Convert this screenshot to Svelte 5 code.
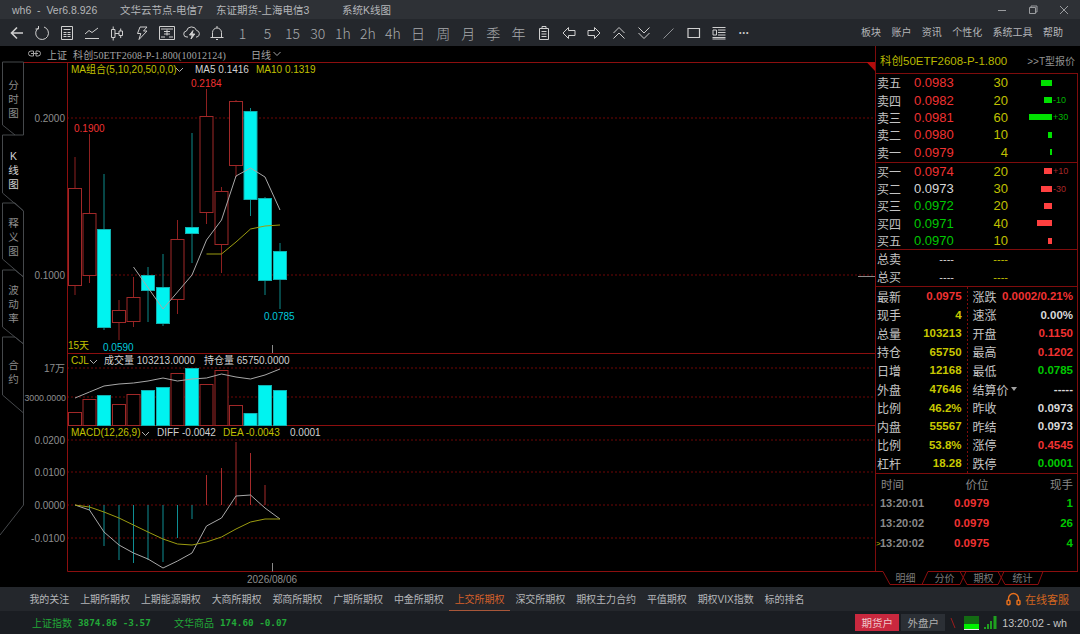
<script>
 const periods = ['1', '5', '15', '30', '1h', '2h', '4h', '日', '周', '月', '季', '年'];
 const menus = ['板块', '账户', '资讯', '个性化', '系统工具', '帮助'];

 // x, open/close box top and bottom, high, low, rising
 const candles = [
     { x: 75, top: 188, bottom: 285, hi: 157, lo: 295, up: true },
     { x: 89.5, top: 213, bottom: 275, hi: 134, lo: 283, up: true },
     { x: 104, top: 229, bottom: 327, hi: 174, lo: 330, up: false },
     { x: 119, top: 310, bottom: 322, hi: 300, lo: 340, up: true },
     { x: 133.5, top: 297, bottom: 321, hi: 277, lo: 327, up: true },
     { x: 148, top: 275, bottom: 290, hi: 267, lo: 322, up: false },
     { x: 163, top: 287, bottom: 323, hi: 254, lo: 326, up: false },
     { x: 177.5, top: 239, bottom: 299, hi: 220, lo: 314, up: true },
     { x: 192, top: 227, bottom: 233, hi: 133, lo: 263, up: false },
     { x: 206.5, top: 116, bottom: 212, hi: 89, lo: 224, up: true },
     { x: 221.5, top: 191, bottom: 244, hi: 187, lo: 273, up: true },
     { x: 236, top: 101, bottom: 165, hi: 100, lo: 177, up: true },
     { x: 250.5, top: 111, bottom: 199, hi: 108, lo: 216, up: false },
     { x: 265, top: 198, bottom: 280, hi: 197, lo: 295, up: false },
     { x: 280, top: 251, bottom: 279, hi: 243, lo: 309, up: false }
 ];
 const volumes = [412, 399, 395, 404, 394, 390, 387, 373, 368, 384, 370, 405, 413, 385, 390];
 const xs = candles.map((c) => c.x);
 const line = (ys, from = 0) => ys.map((y, i) => `${xs[i + from]},${y}`).join(' ');

 const ma5 = '133.5,267 163,309 192,275 206.5,240 221.5,220 236,176 250.5,168 265,177 280,210';
 const ma10 = line([254, 254, 242, 229, 226, 225], 9);
 const cjl = line([398, 392, 386, 384, 383, 381, 378, 381, 379, 378, 374, 377, 379, 375, 369]);
 const diff = line([505, 510, 532, 545, 553, 559, 568, 561, 553, 526, 518, 496, 495, 508, 519]);
 const dea = line([505, 507, 512, 518, 525, 532, 539, 544, 545, 542, 537, 529, 522, 519, 519]);
 const macd = [510, 546, 560, 563, 560, 562, 538, 519, 475, 468, 442, 453, 485];

 const asks = [
     { name: '卖五', price: '0.0983', vol: 30 },
     { name: '卖四', price: '0.0982', vol: 20, delta: '-10' },
     { name: '卖三', price: '0.0981', vol: 60, delta: '+30' },
     { name: '卖二', price: '0.0980', vol: 10 },
     { name: '卖一', price: '0.0979', vol: 4 }
 ];
 const bids = [
     { name: '买一', price: '0.0974', vol: 20, delta: '+10', cls: 'red' },
     { name: '买二', price: '0.0973', vol: 30, delta: '-30', cls: 'white' },
     { name: '买三', price: '0.0972', vol: 20, cls: 'green' },
     { name: '买四', price: '0.0971', vol: 40, cls: 'green' },
     { name: '买五', price: '0.0970', vol: 10, cls: 'green' }
 ];
 const stats = [
     ['最新', '0.0975', 'red', '涨跌', '0.0002/0.21%', 'red'],
     ['现手', '4', 'yellow', '速涨', '0.00%', 'white'],
     ['总量', '103213', 'yellow', '开盘', '0.1150', 'red'],
     ['持仓', '65750', 'yellow', '最高', '0.1202', 'red'],
     ['日增', '12168', 'yellow', '最低', '0.0785', 'green'],
     ['外盘', '47646', 'yellow', '结算价', '-----', 'white'],
     ['比例', '46.2%', 'yellow', '昨收', '0.0973', 'white'],
     ['内盘', '55567', 'yellow', '昨结', '0.0973', 'white'],
     ['比例', '53.8%', 'yellow', '涨停', '0.4545', 'red'],
     ['杠杆', '18.28', 'yellow', '跌停', '0.0001', 'green']
 ];
 const trades = [
     { time: '13:20:01', price: '0.0979', vol: 1 },
     { time: '13:20:02', price: '0.0979', vol: 26 },
     { time: '13:20:02', price: '0.0975', vol: 4, mark: true }
 ];
 const tabs = ['我的关注', '上期所期权', '上期能源期权', '大商所期权', '郑商所期权', '广期所期权', '中金所期权', '上交所期权', '深交所期权', '期权主力合约', '平值期权', '期权VIX指数', '标的排名'];
</script>

<div class="app">
    <header class="titlebar">
        <span class="ver">wh6 &nbsp;-&nbsp; Ver6.8.926</span>
        <span class="node1">文华云节点-电信7</span>
        <span class="node2">东证期货-上海电信3</span>
        <span class="node3">系统K线图</span>
        <div class="winbtns">
            <svg width="12" height="12" viewBox="0 0 12 12"><path d="M2 6.500h8" /></svg>
            <svg width="12" height="12" viewBox="0 0 12 12"><path d="M2.500 3.500h6v6h-6zM4 3.500V2h6v6H8.500" /></svg>
            <svg width="12" height="12" viewBox="0 0 12 12"><path d="M2 2l8 8M10 2l-8 8" /></svg>
        </div>
    </header>

    <nav class="toolbar">
        <span class="tool"><svg width="16" height="16" viewBox="0 0 16 16"><path d="M14 8H3M8 2.500L2.500 8 8 13.500" stroke-width="1.600" /></svg></span>
        <span class="tool"><svg width="16" height="16" viewBox="0 0 16 16"><path d="M5 2.500A6.400 6.400 0 1 0 10 2M4.500 1v3h-3" /></svg></span>
        <span class="tool"><svg width="16" height="16" viewBox="0 0 16 16"><path d="M2.500 1.500h11v13h-11zM4.500 4.500h7M4.500 7.500h3M8.500 7.500h3M4.500 9.500h3M8.500 9.500h3M4.500 11.500h3M8.500 11.500h3" /></svg></span>
        <span class="tool"><svg width="16" height="16" viewBox="0 0 16 16"><path d="M1 9l4-3.500 3 2L14 3M1 13.500h14" /></svg></span>
        <span class="tool"><svg width="16" height="16" viewBox="0 0 16 16"><path d="M2.500 4.500h3.500v8h-3.500zM4.200 1.500v3M4.200 12.500v3M10 6h3.500v4.500H10zM11.700 3.500V6M11.700 10.500v2.500M6 8.500h4" /></svg></span>
        <span class="tool"><svg width="16" height="16" viewBox="0 0 16 16"><path d="M6 2h7l-3.500 4H13L5 14.500l1.800-6H3.500z" /></svg></span>
        <span class="tool"><svg width="18" height="16" viewBox="0 0 18 16"><path d="M1.500 1.500h15v13h-15zM3 4h12M6 6.500h6M6 9h6M9 4.500v6M3 12h4M11 12h4" /></svg></span>
        <span class="tool"><svg width="18" height="16" viewBox="0 0 18 16"><path d="M5 12H4a3 3 0 0 1-.5-6 5.200 5.200 0 0 1 10-.6A3.400 3.400 0 0 1 14 12h-1" /><path d="M10 5.500L6.500 10h2.800L8 14l3.800-5H9z" fill="#cfcfcf" /></svg></span>
        <span class="tool"><svg width="16" height="16" viewBox="0 0 16 16"><path d="M3.500 12.500v-5a4.500 4.500 0 0 1 9 0v5M1.500 12.500h13M7 14.500h2M8 1v2" /></svg></span>

        {#each periods as period}
            <span class="tool period">{period}</span>
        {/each}

        <span class="tool"><svg width="14" height="16" viewBox="0 0 14 16"><path d="M2.500 3.500h9v11h-9zM5 1.500h4v2H5zM4.500 6.500h5M4.500 9h5M4.500 11.500h5" /></svg></span>
        <span class="tool"><svg width="16" height="16" viewBox="0 0 16 16"><path d="M7.500 2.500L2 8l5.500 5.500V10.500H14v-5H7.500z" /></svg></span>
        <span class="tool"><svg width="16" height="16" viewBox="0 0 16 16"><path d="M8.500 2.500L14 8l-5.500 5.500V10.500H2v-5h6.500z" /></svg></span>
        <span class="tool"><svg width="16" height="16" viewBox="0 0 16 16"><path d="M2.500 8L8 2.500 13.500 8M2.500 13.500L8 8l5.500 5.500" /></svg></span>
        <span class="tool"><svg width="16" height="16" viewBox="0 0 16 16"><path d="M2.500 2.500L8 8l5.500-5.500M2.500 8L8 13.500 13.500 8" /></svg></span>
        <span class="tool"><svg width="16" height="16" viewBox="0 0 16 16"><path d="M2.500 13.500l10-10" stroke="#8d9094" /></svg></span>
        <span class="tool"><svg width="16" height="16" viewBox="0 0 16 16"><path d="M2 3.500h11.500v9H2z" stroke-width="1.200" /></svg></span>
        <span class="tool"><svg width="16" height="16" viewBox="0 0 16 16"><path d="M1.500 2.500h13M7 5h7.500M7 7.500h7.500M7 10h7.500M1.500 12.500h13M1.500 14h13M2 5h3.500v5H2z" /></svg></span>
        <span class="tool dots">•••</span>

        <div class="menus">
            {#each menus as menu}
                <span>{menu}</span>
            {/each}
        </div>
    </nav>

    <main class="main">
        <aside class="sidetabs">
            <svg class="sideline" width="24" height="541" viewBox="0 46 24 541">
                <path d="M23.500 62H2.500V125L15 135H23.500V62" />
                <path d="M15 135H2.500V193L23.500 211" />
                <path d="M2.500 203H15L23.500 211M2.500 203V259L23.500 277" />
                <path d="M2.500 270H15L23.500 277M2.500 270V327L23.500 344" />
                <path d="M2.500 337H15L23.500 344M2.500 337V395L23.500 413" />
                <path d="M23.500 211V505L0 535" />
            </svg>
            <div class="vtab t1">分<br />时<br />图</div>
            <div class="vtab on">K<br />线<br />图</div>
            <div class="vtab">释<br />义<br />图</div>
            <div class="vtab t4">波<br />动<br />率</div>
            <div class="vtab">合<br />约</div>
        </aside>

        <section class="chart">
            <div class="subhead">
                <svg width="13" height="8" viewBox="0 0 13 8"><path d="M3 1h2.500v5H3a2.500 2.500 0 0 1 0-5zM8 1h2a2.500 2.500 0 0 1 0 5H8zM3 3.500h7" /></svg>
                <span class="market">上证</span>
                <span class="contract">科创50ETF2608-P-1.800(10012124)</span>
                <span class="period-sel">日线</span>
                <svg width="8" height="6" viewBox="0 0 8 6"><path d="M.5 1l3.500 3.500L7.500 1" /></svg>
            </div>

            <svg class="plot" width="851" height="525" viewBox="24 62 851 525">
                <!-- frame and grid -->
                <g class="grid">
                    <path d="M67 118H875M67 275H875M67 368H875M67 397H875M67 440H875M67 472H875M67 505H875M67 538H875" />
                </g>
                <g class="frame">
                    <path d="M24 62.500H875M67.500 62V571.500H875M67 353.500H875M67 425.500H875" />
                </g>
                <path class="corner" d="M866.500 62H875V71z" />

                <!-- candles -->
                {#each candles as c}
                    <g class={c.up ? 'up' : 'down'}>
                        <line x1={c.x} x2={c.x} y1={c.hi} y2={c.lo} />
                        <rect x={c.x - 6.500} y={c.top + .5} width="13" height={c.bottom - c.top} />
                    </g>
                {/each}
                <polyline class="white-line" points={ma5} />
                <polyline class="yellow-line" points={ma10} />

                <!-- volume -->
                {#each volumes as top, i}
                    <rect class={candles[i].up ? 'vol-up' : 'vol-down'} x={xs[i] - 6.500} y={top + .5} width="13" height={425 - top} />
                {/each}
                <polyline class="white-line" points={cjl} />

                <!-- macd -->
                {#each macd as y, i}
                    <line class={y < 505 ? 'bar-up' : 'bar-down'} x1={xs[i + 1]} x2={xs[i + 1]} y1="505" y2={y} />
                {/each}
                <polyline class="white-line" points={diff} />
                <polyline class="yellow-line" points={dea} />

                <!-- cursor -->
                <path class="cursor" d="M272.500 345V353M272.500 563V571.500M858 276.500H875" />

                <!-- axis labels -->
                <g class="axis">
                    <text x="65" y="122">0.2000</text>
                    <text x="65" y="279">0.1000</text>
                    <text x="65" y="372">17万</text>
                    <text x="66" y="401" class="tiny">3000.0000</text>
                    <text x="65" y="444">0.0200</text>
                    <text x="65" y="476">0.0100</text>
                    <text x="65" y="509">0.0000</text>
                    <text x="65" y="542">-0.0100</text>
                </g>
                <text class="date" x="272" y="583">2026/08/06</text>

                <!-- legends -->
                <g class="legend">
                    <text x="71" y="73" class="olive">MA组合(5,10,20,50,0,0)</text>
                    <path class="chev" d="M176 68l3.500 3.500L183 68" />
                    <text x="195" y="73" class="light">MA5 0.1416</text>
                    <text x="256" y="73" class="olive">MA10 0.1319</text>
                    <text x="71" y="364" class="olive">CJL</text>
                    <path class="chev" d="M90 360l3.500 3.500L97 360" />
                    <text x="104" y="364" class="light">成交量 103213.0000</text>
                    <text x="204" y="364" class="light">持仓量 65750.0000</text>
                    <text x="71" y="436" class="olive">MACD(12,26,9)</text>
                    <path class="chev" d="M142 432l3.500 3.500L149 432" />
                    <text x="157" y="436" class="light">DIFF -0.0042</text>
                    <text x="223" y="436" class="olive">DEA -0.0043</text>
                    <text x="290" y="436" class="light">0.0001</text>
                    <text x="68" y="349" class="olive">15天</text>
                    <text x="191" y="87" class="redtxt">0.2184</text>
                    <text x="74" y="132" class="redtxt">0.1900</text>
                    <text x="264" y="320" class="cyantxt">0.0785</text>
                    <text x="103" y="351" class="cyantxt">0.0590</text>
                </g>
            </svg>
        </section>

        <section class="quote">
            <div class="qtitle">
                <span class="qname">科创50ETF2608-P-1.800</span>
                <span class="qlink">&gt;&gt;T型报价</span>
            </div>

            <div class="qbox">
                <div class="book">
                    {#each asks as row}
                        <div class="brow">
                            <span class="bname">{row.name}</span>
                            <span class="bprice red">{row.price}</span>
                            <span class="bvol">{row.vol}</span>
                            <span class="bbar"><i class="gbar" style="width: {row.vol * 0.38}px;"></i></span>
                            <span class="bdelta green">{row.delta ?? ''}</span>
                        </div>
                    {/each}
                </div>
                <div class="book">
                    {#each bids as row}
                        <div class="brow">
                            <span class="bname">{row.name}</span>
                            <span class="bprice {row.cls}">{row.price}</span>
                            <span class="bvol">{row.vol}</span>
                            <span class="bbar"><i class="rbar" style="width: {row.vol * 0.38}px;"></i></span>
                            <span class="bdelta dimred">{row.delta ?? ''}</span>
                        </div>
                    {/each}
                </div>
                <div class="totals">
                    <div class="brow"><span class="bname">总卖</span><span class="bprice white dash">----</span><span class="bvol dash">----</span></div>
                    <div class="brow"><span class="bname">总买</span><span class="bprice white dash">----</span><span class="bvol dash">----</span></div>
                </div>
                <div class="stats">
                    {#each stats as s}
                        <div class="srow">
                            <div class="scell left">
                                <span class="slabel">{s[0]}</span><b class={s[2]}>{s[1]}</b>
                            </div>
                            <div class="scell right">
                                <span class="slabel">{s[3]}{#if s[3] === '结算价'}<i class="caret"></i>{/if}</span><b class={s[5]}>{s[4]}</b>
                            </div>
                        </div>
                    {/each}
                </div>
                <div class="trades">
                    <div class="thead"><span>时间</span><span>价位</span><span>现手</span></div>
                    {#each trades as t}
                        <div class="trow">
                            <span class="mark">{t.mark ? '>' : ''}</span>
                            <span class="ttime">{t.time}</span>
                            <span class="tprice">{t.price}</span>
                            <span class="tvol">{t.vol}</span>
                        </div>
                    {/each}
                </div>
            </div>

            <div class="qtabs">
                <svg width="205" height="16" viewBox="875 571 205 16">
                    <path d="M875 571.500H883L890 584.500H922L928 571.500H1078" />
                    <path d="M922 584.500H960L966 571.500M960 571.500L967 584.500H998L1004 571.500M998 571.500L1005 584.500H1038L1043 571.500" />
                </svg>
                <span>明细</span><span>分价</span><span>期权</span><span>统计</span>
            </div>
        </section>
    </main>

    <nav class="tabs">
        <div class="tablist">
            {#each tabs as tab}
                <span class:active={tab === '上交所期权'}>{tab}</span>
            {/each}
        </div>
        <div class="service">
            <svg width="15" height="15" viewBox="0 0 15 15"><path d="M2.500 9V6.500a5 5 0 0 1 10 0V9" /><path d="M1 9a1.800 1.800 0 0 1 3 0v3a1.800 1.800 0 0 1-3 0zM11 9a1.800 1.800 0 0 1 3 0v3a1.800 1.800 0 0 1-3 0z" /></svg>
            <span>在线客服</span>
        </div>
    </nav>

    <footer class="status">
        <span class="idx idx1">上证指数</span><span class="num">3874.86 -3.57</span>
        <span class="idx idx2">文华商品</span><span class="num">174.60 -0.07</span>
        <div class="right">
            <span class="acct acct-on">期货户</span>
            <span class="acct">外盘户</span>
            <svg width="6" height="12" viewBox="0 0 6 12" class="slash"><path d="M1 1l4 10" /></svg>
            <span class="meter"></span>
            <svg width="14" height="13" viewBox="0 0 14 13" class="signal"><path d="M1 11h2v2H1zM4 8h2v5H4zM7 5h2v8H7zM10.500 0h3v13h-3z" /></svg>
            <span class="clock">13:20:02 - wh</span>
        </div>
    </footer>
</div>

<style>
 :global(body) {
     margin: 0;
     background: #000;
 }

 .app {
     width: 1080px;
     height: 634px;
     display: flex;
     flex-direction: column;
     overflow: hidden;
     font-family: "Liberation Sans", "Noto Sans CJK SC", sans-serif;
     color: #c8c8c8;
     background: #000;
 }

 svg {
     fill: none;
     stroke: #cfcfcf;
     display: block;
 }

 /* title bar */
 .titlebar {
     height: 19px;
     flex: none;
     background: #2e3136;
     display: flex;
     align-items: center;
     font-size: 10.500px;
     color: #b4b6b9;
     padding-left: 12px;
     box-sizing: border-box;
 }

 .ver { width: 108px; white-space: nowrap; }
 .node1 { width: 96px; white-space: nowrap; }
 .node2 { width: 126px; white-space: nowrap; }
 .node3 { white-space: nowrap; }

 .winbtns {
     margin-left: auto;
     display: flex;
     gap: 19px;
     padding-right: 10px;
 }

 .winbtns svg { stroke: #9a9c9f; }

 /* toolbar */
 .toolbar {
     height: 27px;
     flex: none;
     background: #24272c;
     display: flex;
     align-items: center;
     padding-left: 4px;
 }

 .tool {
     width: 25.100px;
     height: 27px;
     flex: none;
     display: flex;
     align-items: center;
     justify-content: center;
 }

 .period {
     font-family: "Noto Sans CJK SC", sans-serif;
     font-weight: 300;
     font-size: 14px;
     color: #a8aaad;
 }

 .dots {
     font-size: 7px;
     letter-spacing: 1px;
     color: #d0d0d0;
 }

 .menus {
     margin-left: auto;
     display: flex;
     gap: 10.400px;
     font-size: 10px;
     color: #b4b6b9;
     padding-right: 17px;
     padding-bottom: 2px;
 }

 /* main */
 .main {
     flex: 1;
     display: flex;
     min-height: 0;
 }

 .sidetabs {
     width: 24px;
     flex: none;
     position: relative;
     padding-top: 32px;
     box-sizing: border-box;
 }

 .sideline {
     position: absolute;
     left: 0;
     top: 0;
     stroke: #45484b;
 }

 .vtab {
     position: relative;
     height: 67px;
     padding-left: 3px;
     box-sizing: border-box;
     text-align: center;
     font-size: 10.500px;
     line-height: 14px;
     color: #8c8c8c;
 }

 .vtab.t1 { height: 71px; }
 .vtab.t4 { height: 75px; }
 .vtab.on { color: #d2d2d2; }

 .chart {
     width: 851px;
     flex: none;
     display: flex;
     flex-direction: column;
 }

 .subhead {
     height: 16px;
     flex: none;
     display: flex;
     align-items: center;
     font-size: 10px;
     color: #a4a4a4;
     padding-left: 4px;
 }

 .subhead svg { stroke: #a4a4a4; }

 .market { margin-left: 6px; }

 .contract {
     margin-left: 6px;
     font-family: "Liberation Serif", "Noto Sans CJK SC", serif;
     letter-spacing: .13px;
     width: 178px;
     white-space: nowrap;
 }

 .period-sel { margin-right: 2px; }

 .plot text {
     font-size: 10px;
     stroke: none;
 }

 .corner {
     fill: #b40c0c;
     stroke: none;
 }

 .grid path {
     stroke: #6e0606;
     stroke-dasharray: 2 2;
 }

 .frame path { stroke: #8c0f0f; }

 .up line { stroke: #8e2020; }
 .up rect { fill: #000; stroke: #a02828; }
 .down line { stroke: #0d8b8b; }
 .down rect { fill: #00f3f0; stroke: #11b0b0; }

 .vol-up { fill: #000; stroke: #a02828; }
 .vol-down { fill: #00f3f0; stroke: #11b0b0; }

 .white-line { stroke: #a8a8a8; fill: none; }
 .yellow-line { stroke: #9c9c10; fill: none; }

 .bar-up { stroke: #a52a2a; }
 .bar-down { stroke: #0f8e94; }

 .cursor { stroke: #8a8a8a; }

 .axis text {
     fill: #8e8e8e;
     text-anchor: end;
 }

 .axis .tiny { font-size: 8.800px; }

 .date {
     fill: #8e8e8e;
     text-anchor: middle;
 }

 .chev { stroke: #b0b0b0; }

 .olive { fill: #c0c000; }
 .light { fill: #d0d0d0; }
 .redtxt { fill: #f03232; }
 .cyantxt { fill: #00c8dc; }

 /* right hand quote */
 .quote {
     width: 205px;
     flex: none;
     display: flex;
     flex-direction: column;
 }

 .qtitle {
     height: 27px;
     flex: none;
     display: flex;
     justify-content: space-between;
     align-items: center;
     padding: 1px 5px 0 4px;
     box-sizing: border-box;
     border-left: 1px solid #7e0c0c;
     font-size: 11.500px;
 }

 .qname { color: #b8b800; }
 .qlink { color: #909090; font-size: 10px; }

 .qbox {
     height: 498px;
     flex: none;
     border: 1px solid #7e0c0c;
     border-bottom: none;
     box-sizing: border-box;
     display: flex;
     flex-direction: column;
     margin-right: 2px;
 }

 .book {
     height: 88.500px;
     flex: none;
     border-bottom: 1px solid #7e0c0c;
     box-sizing: border-box;
 }

 .book + .book { height: 87px; }

 .brow {
     height: 17.400px;
     display: flex;
     align-items: center;
     font-size: 13px;
 }

 .bname {
     width: 38px;
     padding-left: 1px;
     box-sizing: border-box;
     font-size: 12px;
     color: #c4c4c4;
 }

 .bprice { width: 40px; }

 .bvol {
     width: 54px;
     text-align: right;
     color: #c0c000;
 }

 .bbar {
     width: 44px;
     height: 6px;
     display: flex;
     justify-content: flex-end;
 }

 .bbar i { display: block; height: 6px; }

 .gbar { background: #00e000; }
 .rbar { background: #ff4040; }

 .bdelta {
     font-size: 9px;
     padding-left: 1px;
 }

 .bdelta.green { color: #00b400; }
 .bdelta.dimred { color: #a82828; }

 .red { color: #f03232; }
 .green { color: #00c800; }
 .white { color: #d8d8d8; }
 .yellow { color: #c8c800; }

 .totals {
     height: 37.500px;
     flex: none;
     border-bottom: 1px solid #7e0c0c;
     box-sizing: border-box;
 }

 .totals .brow { height: 18px; }

 .dash { font-size: 11px; }
 .bprice.dash { text-align: right; }
 .bvol.dash { color: #c0c000; }

 .stats {
     height: 187px;
     flex: none;
     border-bottom: 1px solid #7e0c0c;
     box-sizing: border-box;
     display: flex;
     flex-direction: column;
     background: linear-gradient(#7e0c0c 50%, transparent 50%) 91px 0 / 1px 4px repeat-y;
 }

 .srow {
     height: 18.550px;
     display: flex;
 }

 .scell {
     display: flex;
     justify-content: space-between;
     align-items: center;
     box-sizing: border-box;
 }

 .scell.left { width: 92px; padding: 0 6px 0 1px; }
 .scell.right { width: 110px; padding: 0 4px 0 5px; }

 .slabel {
     font-size: 12px;
     color: #c4c4c4;
     display: flex;
     align-items: center;
 }

 .scell b { font-size: 11.500px; }

 .caret {
     width: 0;
     height: 0;
     border: 3.500px solid transparent;
     border-top: 4px solid #a0a0a0;
     border-bottom: none;
     margin-left: 2px;
 }

 .trades {
     flex: 1;
     padding: 0 4px 0 0;
 }

 .thead {
     height: 19px;
     display: flex;
     justify-content: space-between;
     align-items: center;
     padding-left: 5px;
     font-size: 11.500px;
     color: #888;
 }

 .trow {
     height: 20.200px;
     display: flex;
     align-items: center;
     font-size: 11.500px;
     font-weight: bold;
 }

 .mark {
     width: 4px;
     flex: none;
     font-size: 8px;
     font-weight: normal;
     color: #c8c800;
 }

 .ttime { width: 74px; color: #8a8a8a; font-size: 11px; }
 .tprice { color: #f03232; }
 .tvol { margin-left: auto; color: #00c800; }

 .qtabs {
     height: 16px;
     flex: none;
     position: relative;
     display: flex;
     padding-left: 11px;
     font-size: 10px;
     color: #7c7c7c;
 }

 .qtabs svg {
     position: absolute;
     left: 0;
     top: 0;
     stroke: #8c0f0f;
 }

 .qtabs span {
     width: 39px;
     text-align: center;
     line-height: 15px;
     position: relative;
 }

 /* bottom tabs */
 .tabs {
     height: 24px;
     flex: none;
     background: #24272c;
     display: flex;
     align-items: stretch;
     justify-content: space-between;
     padding-left: 24px;
     box-sizing: border-box;
 }

 .tablist {
     display: flex;
     font-size: 10px;
     color: #b4b6b9;
 }

 .tablist span {
     padding: 0 5.380px;
     display: flex;
     align-items: center;
     white-space: nowrap;
     box-sizing: border-box;
     border-bottom: 1px solid transparent;
 }

 .tablist .active {
     color: #d6602a;
     border-bottom-color: #a8573a;
 }

 .service {
     display: flex;
     align-items: center;
     gap: 4px;
     font-size: 11px;
     color: #d0651f;
     padding-right: 11px;
 }

 .service svg { stroke: #e8701c; stroke-width: 1.400; }

 /* status */
 .status {
     height: 23px;
     flex: none;
     background: #1a1d22;
     display: flex;
     align-items: center;
     font-size: 10px;
     color: #22a838;
 }

 .idx1 { margin-left: 32px; }
 .idx2 { margin-left: 24px; }

 .num {
     margin-left: 6px;
     font-family: "DejaVu Sans Mono", monospace;
     font-size: 9.300px;
     font-weight: bold;
     width: 72px;
     white-space: pre;
 }

 .right {
     margin-left: auto;
     display: flex;
     align-items: center;
     padding-right: 13px;
 }

 .acct {
     width: 44px;
     height: 17px;
     margin-left: 2px;
     background: #2b2f35;
     color: #b0b0b0;
     font-size: 10.500px;
     display: flex;
     align-items: center;
     justify-content: center;
 }

 .acct-on {
     background: #c9283e;
     color: #f0c8cc;
 }

 .slash {
     stroke: #9c1c1c;
     margin: 0 8px 0 5px;
 }

 .meter {
     width: 15px;
     height: 14px;
     background: linear-gradient(#136a13 60%, #00f000 60%, #00f000 90%, #e8e8e8 90%);
 }

 .signal {
     fill: #1f9f1f;
     stroke: none;
     margin: 0 5px 0 4px;
 }

 .clock {
     font-size: 10.700px;
     color: #c4c4c4;
     white-space: nowrap;
 }
</style>
